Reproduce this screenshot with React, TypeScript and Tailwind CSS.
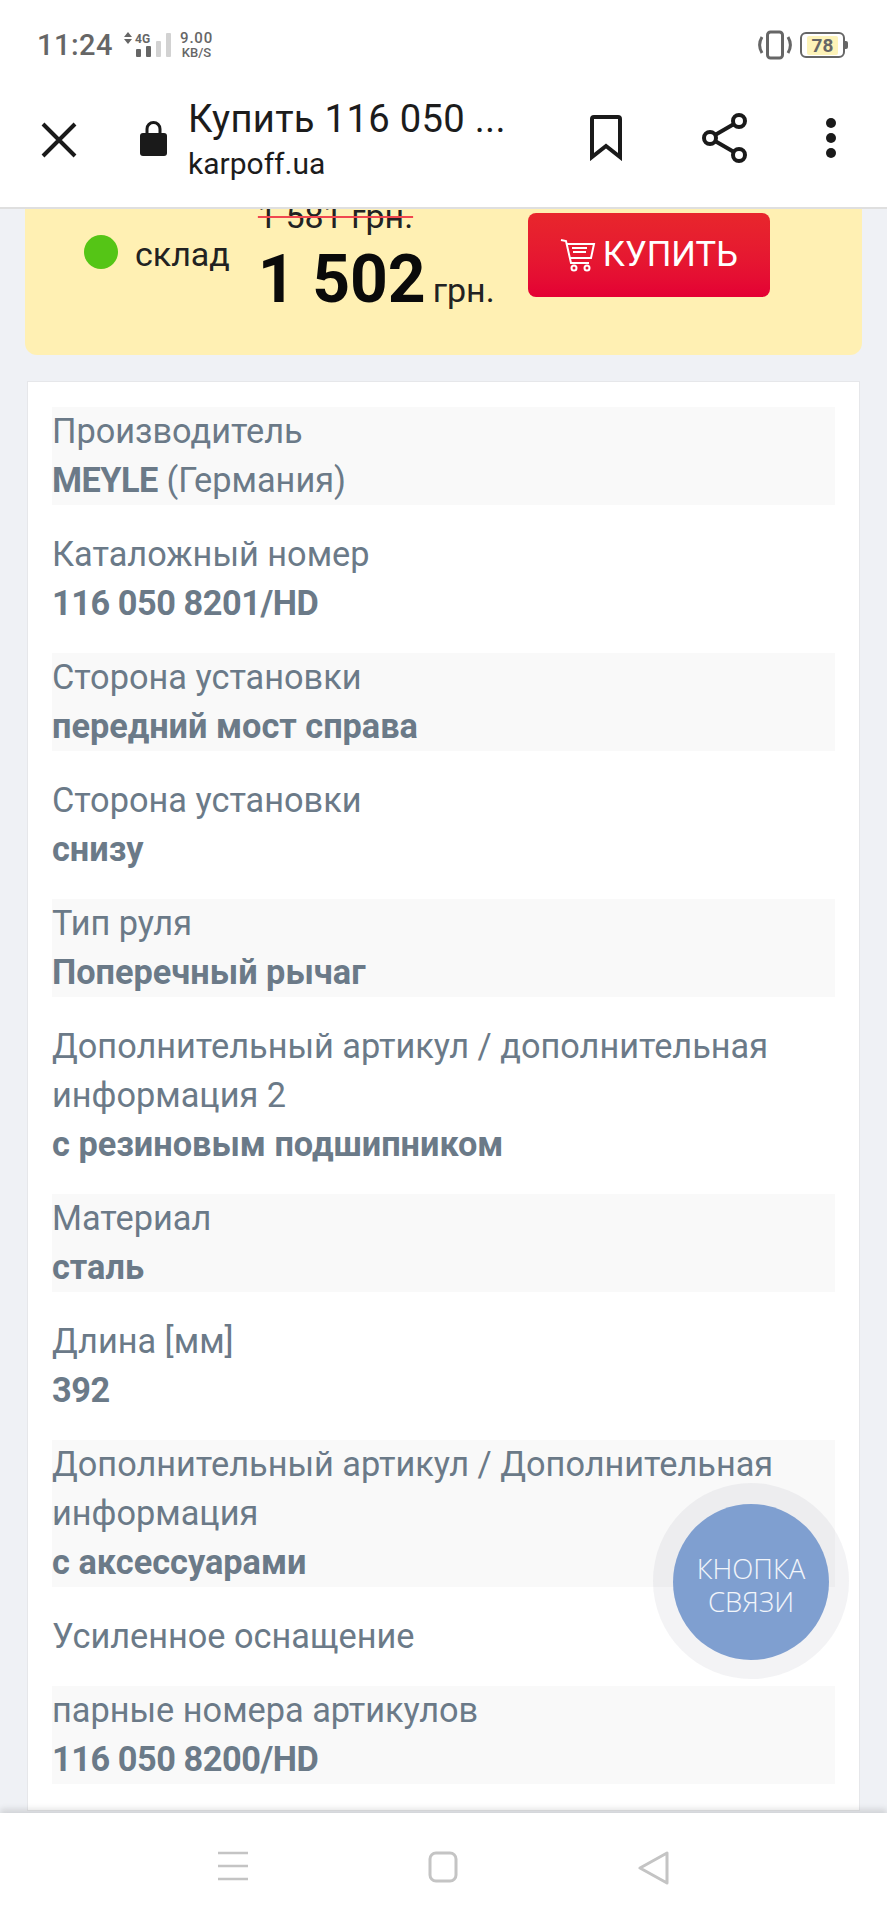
const rows: { label: string; value?: React.ReactNode; striped: boolean }[] = [
  { label: "Производитель", value: <><b className="font-bold tracking-[-0.5px]">MEYLE</b> (Германия)</>, striped: true },
  { label: "Каталожный номер", value: <b className="font-bold tracking-[-0.45px]">116 050 8201/HD</b>, striped: false },
  { label: "Сторона установки", value: <b className="font-bold">передний мост справа</b>, striped: true },
  { label: "Сторона установки", value: <b className="font-bold">снизу</b>, striped: false },
  { label: "Тип руля", value: <b className="font-bold">Поперечный рычаг</b>, striped: true },
  { label: "Дополнительный артикул / дополнительная информация 2", value: <b className="font-bold">с резиновым подшипником</b>, striped: false },
  { label: "Материал", value: <b className="font-bold">сталь</b>, striped: true },
  { label: "Длина [мм]", value: <b className="font-bold tracking-[-0.45px]">392</b>, striped: false },
  { label: "Дополнительный артикул / Дополнительная информация", value: <b className="font-bold">с аксессуарами</b>, striped: true },
  { label: "Усиленное оснащение", striped: false },
  { label: "парные номера артикулов", value: <b className="font-bold tracking-[-0.45px]">116 050 8200/HD</b>, striped: true },
];

function StatusBar() {
  return (
    <div className="flex h-[90px] items-center justify-between pl-[37px] pr-[42px] text-[#666666]">
      <div className="flex items-center">
        <span className="text-[29px] font-medium leading-none tracking-[0.5px]">11:24</span>
        <svg width="60" height="30" viewBox="0 0 60 30" className="ml-[9px]" aria-hidden>
          <path d="M6 2l4 5H2zM6 14l4-5H2z" fill="#666" />
          <rect x="14" y="19" width="5" height="8" rx="1" fill="#666" />
          <rect x="24" y="16" width="5" height="11" rx="1" fill="#666" />
          <rect x="34" y="11" width="5" height="16" rx="1" fill="#d2d2d2" />
          <rect x="44" y="3" width="5" height="24" rx="1" fill="#d2d2d2" />
          <text x="13" y="13" fontSize="12" fontWeight="700" fill="#666" fontFamily="Roboto">4G</text>
        </svg>
        <div className="-ml-[2px] flex flex-col items-center text-[15px] font-medium leading-[15px]">
          <span className="tracking-[0.8px]">9.00</span>
          <span className="text-[13px] leading-[13px]">KB/S</span>
        </div>
      </div>
      <div className="flex items-center gap-[7px]">
        <svg width="36" height="30" viewBox="0 0 36 30" fill="none" stroke="#666" aria-hidden>
          <rect x="10.5" y="2" width="15" height="26" rx="3" strokeWidth="3" />
          <path d="M5 7c-3 5-3 11 0 16M31 7c3 5 3 11 0 16" strokeWidth="3" />
        </svg>
        <div className="relative flex h-[26px] w-[45px] items-center justify-center rounded-[6px] border-2 border-[#666666]">
          <span className="rounded-[2px] bg-[#fdf3b8] px-[5px] text-[19px] font-bold leading-[19px] text-[#666666]">78</span>
          <span className="absolute right-[-5px] top-[7px] h-[8px] w-[3px] rounded-r-[2px] bg-[#666666]" />
        </div>
      </div>
    </div>
  );
}

function TopBar() {
  return (
    <div className="flex h-[117px] items-start">
      <svg width="36" height="36" viewBox="0 0 36 36" className="ml-[41px] mt-[32px]" fill="none" stroke="#1a1a1a" strokeWidth="4" aria-hidden>
        <path d="M2 2l32 32M34 2L2 34" />
      </svg>
      <svg width="27" height="36" viewBox="0 0 27 36" className="ml-[63px] mt-[30px]" aria-hidden>
        <path d="M7 15V9a6.5 6.5 0 0113 0v6" fill="none" stroke="#1a1a1a" strokeWidth="3" />
        <rect x="0" y="13" width="27" height="23" rx="3" fill="#1a1a1a" />
      </svg>
      <div className="ml-[21px] w-[340px] pt-[7px] text-[#1c1c1c]">
        <div className="text-[38.2px] leading-[44px] tracking-[0.3px]">Купить 116 050 ...</div>
        <div className="mt-[5px] text-[30px] leading-[36px]">karpoff.ua</div>
      </div>
      <svg width="34" height="46" viewBox="0 0 34 46" className="ml-[61px] mt-[25px]" fill="none" stroke="#1a1a1a" strokeWidth="4" aria-hidden>
        <path d="M3 4a2 2 0 012-2h24a2 2 0 012 2v38L17 31 3 42z" />
      </svg>
      <svg width="46" height="50" viewBox="0 0 46 50" className="ml-[79px] mt-[23px]" fill="none" stroke="#1a1a1a" strokeWidth="4" aria-hidden>
        <circle cx="37" cy="8" r="6" />
        <circle cx="8" cy="25" r="6" />
        <circle cx="37" cy="42" r="6" />
        <path d="M13 22l19-11M13 28l19 11" />
      </svg>
      <svg width="12" height="42" viewBox="0 0 12 42" className="ml-[77px] mt-[27px]" fill="#1a1a1a" aria-hidden>
        <circle cx="6" cy="6" r="5" />
        <circle cx="6" cy="21" r="5" />
        <circle cx="6" cy="36" r="5" />
      </svg>
    </div>
  );
}

function CartIcon() {
  return (
    <svg width="36" height="34" viewBox="0 0 36 34" fill="none" stroke="#fff" strokeWidth="2" aria-hidden>
      <path d="M1 2l5 1 5 22h18" />
      <path d="M7 6h27l-3 14H10" />
      <path d="M12 10h15M13 14h13" />
      <circle cx="14" cy="30" r="2.5" />
      <circle cx="27" cy="30" r="2.5" />
    </svg>
  );
}

export default function App() {
  return (
    <div className="relative flex h-[1920px] w-[887px] flex-col overflow-hidden bg-[#eff1f5] font-['Roboto',sans-serif]">
      <header className="h-[209px] shrink-0 border-b-2 border-[#dfdfdf] bg-white">
        <StatusBar />
        <TopBar />
      </header>

      <main className="min-h-0 flex-1 overflow-hidden px-[25px]">
        <section className="flex h-[146px] items-start rounded-b-[12px] bg-[#fff0b3] pl-[59px]">
          <span className="mt-[26px] h-[34px] w-[34px] shrink-0 rounded-full bg-[#55c516]" />
          <span className="ml-[17px] mt-[25px] text-[34px] leading-[40px] text-[#222222]">склад</span>
          <div className="ml-[28px] -mt-[13px] flex w-[270px] shrink-0 flex-col">
            <span className="w-fit text-[34px] leading-[40px] text-[#222222] line-through decoration-[#f0474f] decoration-2">1 581 грн.</span>
            <div className="mt-[4px] flex items-baseline">
              <span className="text-[66px] font-bold leading-[80px] text-[#0a0a0a]">1 502</span>
              <span className="ml-[7px] text-[34px] text-[#222222]">грн.</span>
            </div>
          </div>
          <button className="mt-[4px] flex h-[84px] w-[242px] items-center justify-center gap-[7px] rounded-[8px] bg-gradient-to-b from-[#e8262c] to-[#e40034] text-[34.5px] text-white">
            <CartIcon />
            <span>КУПИТЬ</span>
          </button>
        </section>

        <section className="mx-[2px] mt-[26px] border border-[#e6e7ea] bg-white px-[24px] pt-[25px] text-[34.3px] leading-[49px] text-[#6b7a88]">
          {rows.map((r, i) => (
            <div key={i} className={`mb-[25.05px] ${r.striped ? "bg-[#f9f9f9]" : ""}`}>
              <div>{r.label}</div>
              {r.value && <div>{r.value}</div>}
            </div>
          ))}
        </section>
      </main>

      <div className="absolute left-[653px] top-[1483px] flex h-[196px] w-[196px] items-center justify-center rounded-full bg-[#7f7f8f]/[0.09]">
        <div className="mt-[1px] flex h-[156px] w-[156px] flex-col items-center justify-center rounded-full bg-[#7f9fd0] pt-[7px] text-[27.5px] font-light leading-[33px] text-white/90 font-['Open_Sans',sans-serif]">
          <span>КНОПКА</span>
          <span>СВЯЗИ</span>
        </div>
      </div>

      <nav className="relative flex h-[107px] shrink-0 items-start justify-center gap-[180px] bg-white pt-[38px] shadow-[0_-4px_6px_rgba(0,0,0,0.12)]">
        <svg width="30" height="30" viewBox="0 0 30 30" stroke="#c4c4c4" strokeWidth="2.5" aria-hidden>
          <path d="M0 2h30M0 15h30M0 28h30" />
        </svg>
        <svg width="30" height="32" viewBox="0 0 30 32" fill="none" stroke="#c4c4c4" strokeWidth="3" aria-hidden>
          <rect x="2" y="2" width="26" height="28" rx="6" />
        </svg>
        <svg width="32" height="34" viewBox="0 0 32 34" fill="none" stroke="#c4c4c4" strokeWidth="3" strokeLinejoin="round" aria-hidden>
          <path d="M29 2v30L2 17z" />
        </svg>
      </nav>
    </div>
  );
}
